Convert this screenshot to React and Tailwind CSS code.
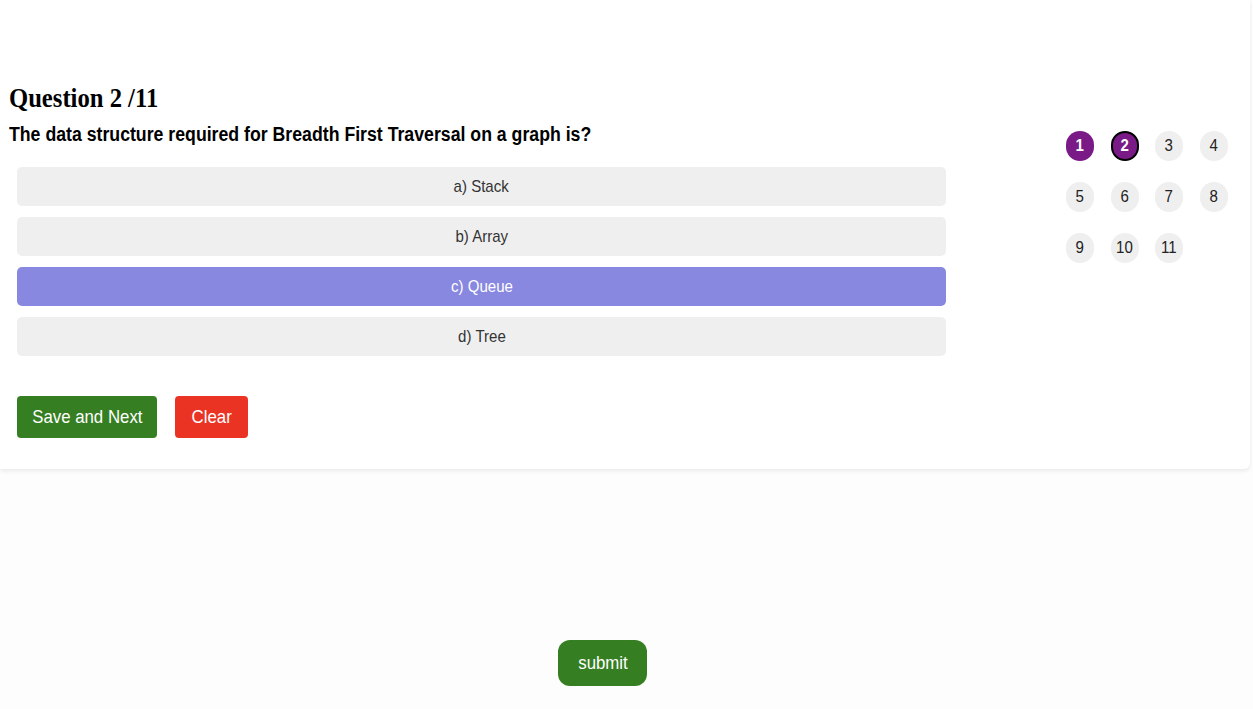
const options = ['a) Stack', 'b) Array', 'c) Queue', 'd) Tree']
const selected = 2

// the reference renders text narrower than Liberation Sans; squeeze it a bit
function Narrow({ children, left }) {
  return (
    <span className={`inline-block scale-x-[0.885] ${left ? 'origin-left' : 'origin-center'}`}>
      {children}
    </span>
  )
}

function Bubble({ n }) {
  let cls = 'bg-[#efefef] text-[#222]'
  if (n === 1) cls = 'bg-[#7a1a86] text-white font-bold'
  if (n === 2) cls = 'bg-[#7a1a86] text-white font-bold border-2 border-black'
  return (
    <div className={`w-[28px] h-[30px] rounded-full flex items-center justify-center text-[17px] ${cls}`}>
      <Narrow>{n}</Narrow>
    </div>
  )
}

export default function App() {
  const nums = Array.from({ length: 11 }, (_, i) => i + 1)
  return (
    <div className="min-h-[709px] bg-[#fdfdfd] font-['Liberation_Sans',Arial,sans-serif]">
      <div className="w-[1250px] h-[469px] bg-white rounded-br-md shadow-[0_2px_4px_rgba(0,0,0,0.08)] flex pt-[82px]">
        <div className="w-[955px] pl-[9px]">
          <h1 className="font-['Liberation_Serif',serif] font-bold text-[28px] leading-[32px] text-black">
            <span className="inline-block scale-x-[0.88] origin-left">Question 2 /11</span>
          </h1>
          <p className="font-bold text-[20px] leading-[24px] mt-[8px] text-black">
            <Narrow left>The data structure required for Breadth First Traversal on a graph is?</Narrow>
          </p>
          <div className="ml-[8px] mt-[21px] w-[929px] flex flex-col gap-[11px]">
            {options.map((o, i) => (
              <div
                key={o}
                className={`h-[39px] rounded-[5px] flex items-center justify-center text-[17px] ${
                  i === selected ? 'bg-[#8888e0] text-white' : 'bg-[#efefef] text-[#333]'
                }`}
              >
                <Narrow>{o}</Narrow>
              </div>
            ))}
          </div>
          <div className="ml-[8px] mt-[40px] flex gap-[18px]">
            <button className="h-[42px] w-[140px] rounded-[4px] bg-[#367e22] text-white text-[19px]">
              <Narrow>Save and Next</Narrow>
            </button>
            <button className="h-[42px] w-[73px] rounded-[4px] bg-[#eb3324] text-white text-[19px]">
              <Narrow>Clear</Narrow>
            </button>
          </div>
        </div>
        <div className="pl-[111px] pt-[49px]">
          <div className="grid grid-cols-[repeat(4,28px)] gap-x-[16.5px] gap-y-[21px]">
            {nums.map((n) => (
              <Bubble key={n} n={n} />
            ))}
          </div>
        </div>
      </div>
      <div className="pl-[558px] pt-[171px]">
        <button className="h-[46px] w-[89px] rounded-[12px] bg-[#367e22] text-white text-[19px]">
          <Narrow>submit</Narrow>
        </button>
      </div>
    </div>
  )
}
